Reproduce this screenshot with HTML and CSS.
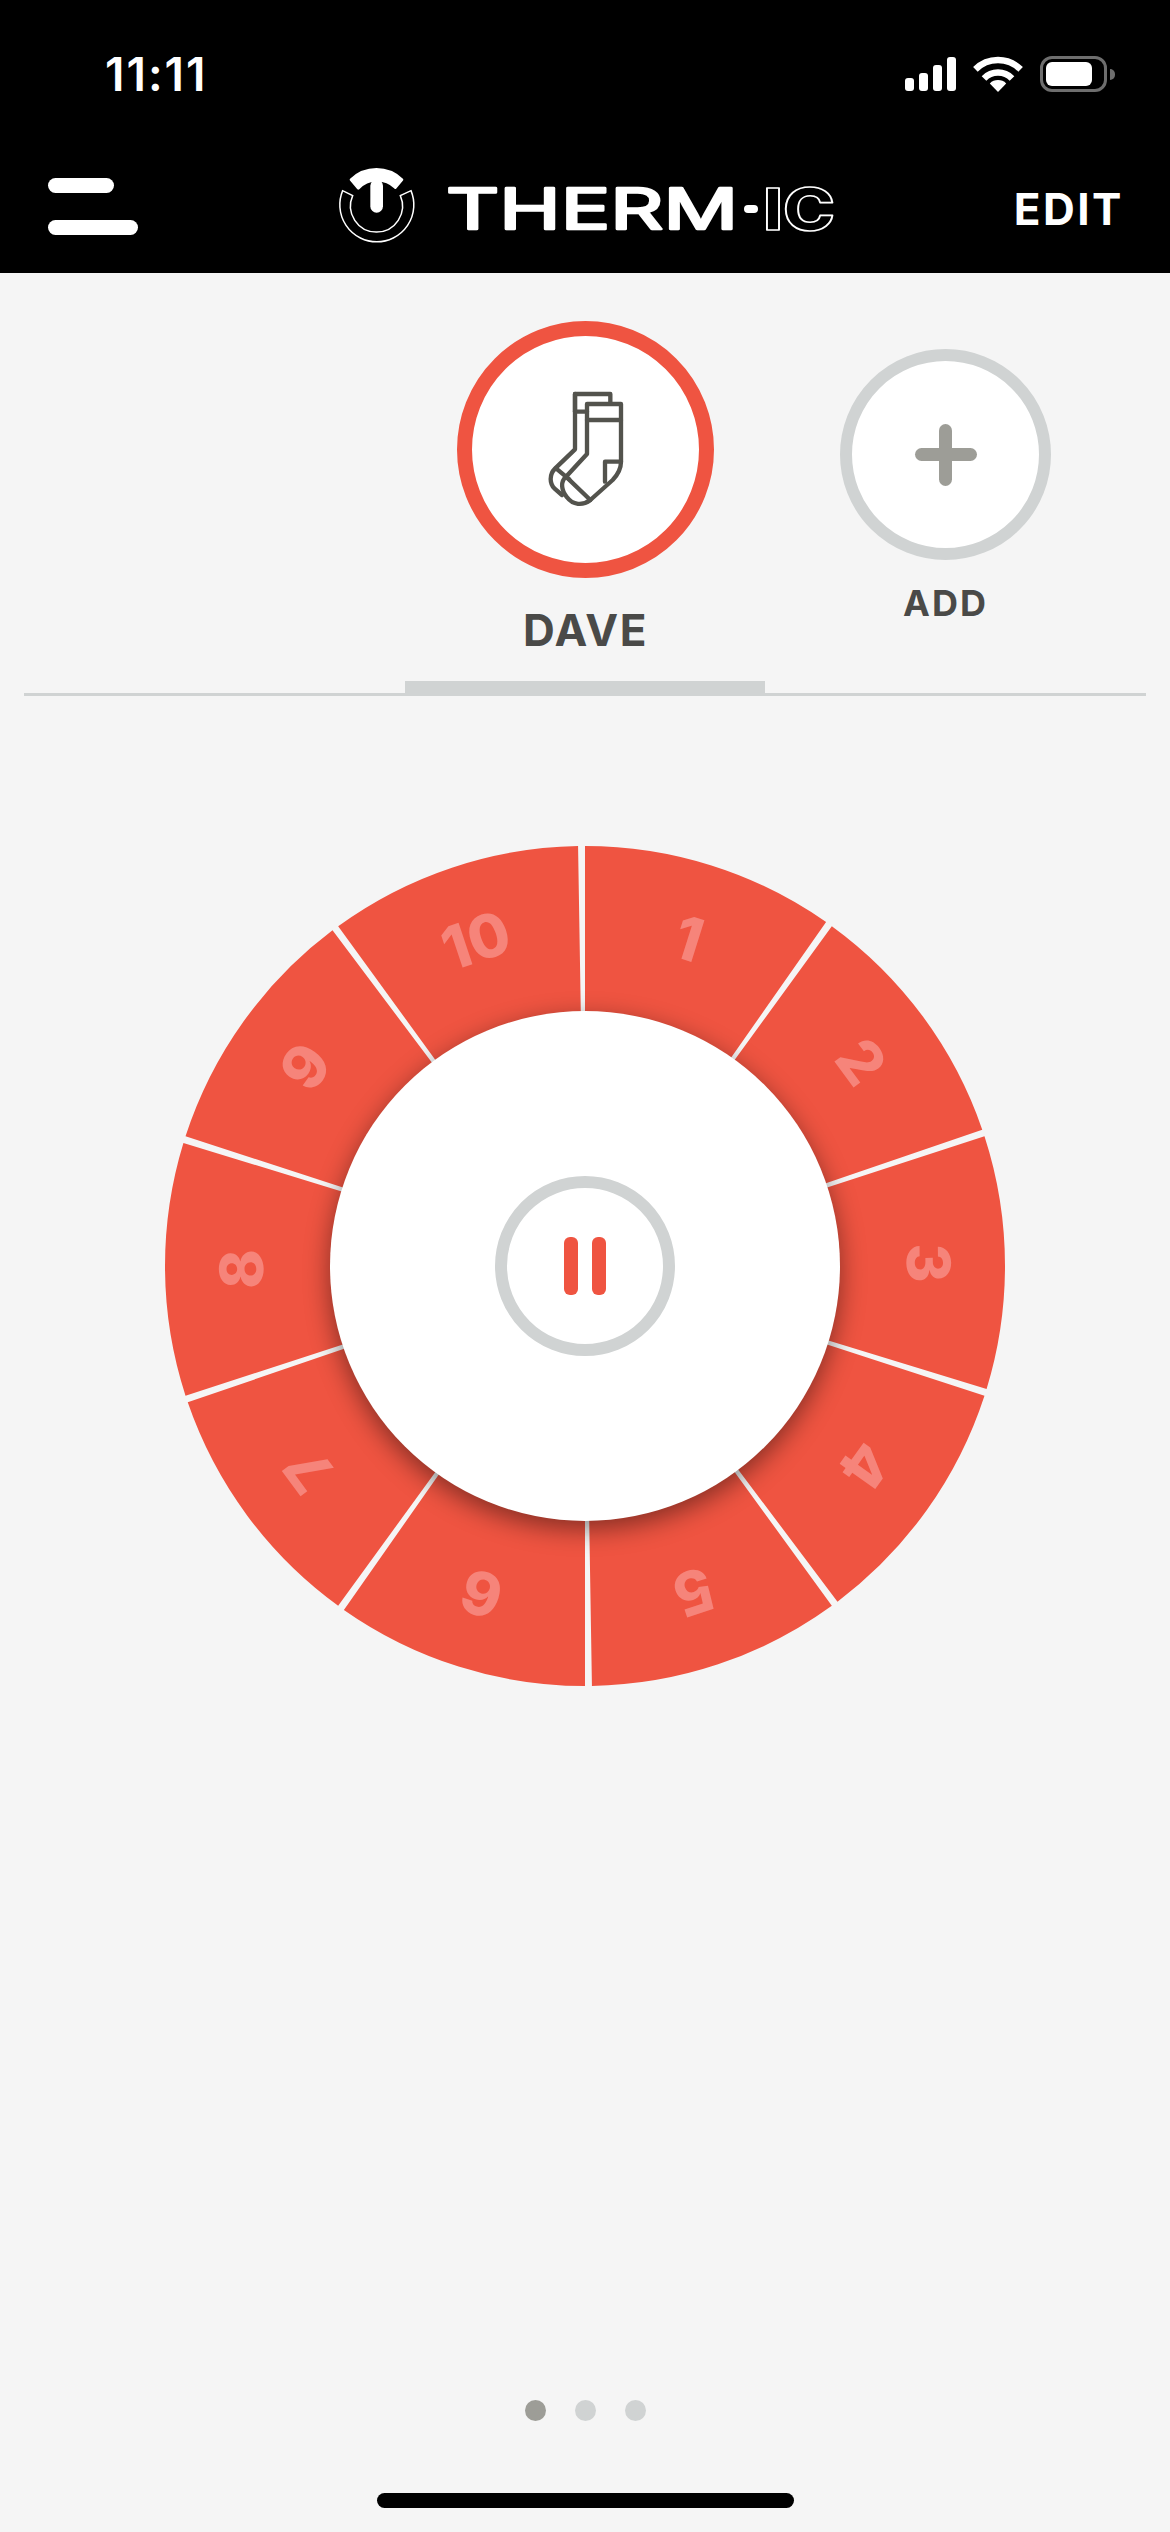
FILE: index.html
```html
<!DOCTYPE html>
<html lang="en">
<head>
  <meta charset="UTF-8" />
  <title>Therm-ic</title>
  <link rel="stylesheet" href="styles.css">
</head>
<body>
  <header class="topbar">
    <div class="status">
      <span class="time">11:11</span>
      <div class="status-icons">
        <div class="signal">
          <span class="bar bar1"></span>
          <span class="bar bar2"></span>
          <span class="bar bar3"></span>
          <span class="bar bar4"></span>
        </div>
        <svg class="wifi" width="50" height="36" viewBox="0 0 50 36">
          <path class="wifi-arc" d="M2.4 13.4A32 32 0 0 1 47.6 13.4" />
          <path class="wifi-arc" d="M11 22.4A19.6 19.6 0 0 1 39 22.4" />
          <path class="wifi-dot" d="M25 36L16.8 27.4A11.8 11.8 0 0 1 33.2 27.4Z" />
        </svg>
        <div class="battery">
          <div class="battery-body"><span class="battery-fill"></span></div>
          <span class="battery-nub"></span>
        </div>
      </div>
    </div>

    <nav class="nav">
      <div class="menu">
        <span class="menu-line short"></span>
        <span class="menu-line"></span>
      </div>
      <svg class="logo" width="505" height="85" viewBox="333 165 505 85">
        <g transform="translate(300 150) scale(0.3333)">
          <path class="logo-ring" d="M125 125A111 111 0 1 0 330 125L298 140A78 78 0 1 1 155 140Z" />
          <path class="logo-cap" d="M150 92A110 110 0 0 1 303 92L283 116A78 78 0 0 0 172 118Z" />
          <path class="logo-stem" d="M227 110V172" />
        </g>
        <text class="logo-word" x="445" y="230" textLength="292" lengthAdjust="spacingAndGlyphs">THERM</text>
        <rect class="logo-dot" x="743" y="206" width="14" height="8" rx="4" />
        <text class="logo-word-thin" x="762" y="230.5" textLength="72" lengthAdjust="spacingAndGlyphs">IC</text>
      </svg>
      <span class="edit">EDIT</span>
    </nav>
  </header>

  <section class="profiles">
    <div class="profile active">
      <div class="avatar">
        <svg class="sock" width="170" height="140" viewBox="0 0 510 420">
          <path d="M222 95V42H328V70" />
          <path d="M222 95H258" />
          <path d="M222 42V208L162 266C144 284 146 310 160 325L183 345" />
          <path d="M165 265L205 298" />
          <path d="M258 72H360V245C360 268 350 284 335 300L268 360C245 378 215 375 198 352C180 330 178 305 195 290L258 222Z" />
          <path d="M258 120H360" />
          <path d="M195 290L268 360" />
          <path d="M360 245H312V305" />
        </svg>
      </div>
      <span class="profile-name">DAVE</span>
    </div>
    <div class="profile add">
      <div class="avatar">
        <span class="plus"></span>
      </div>
      <span class="profile-name">ADD</span>
    </div>
  </section>

  <div class="tab-rule">
    <span class="rule-seg"></span>
    <span class="tab-indicator"></span>
    <span class="rule-seg"></span>
  </div>

  <main class="wheel">
    <svg class="wheel-ring" width="840" height="840" viewBox="0 0 840 840">
      <circle cx="420" cy="420" r="330" pathLength="360" transform="rotate(-90 420 420)" />
    </svg>

    <span class="wheel-num" style="--a:17.5deg">1</span>
    <span class="wheel-num" style="--a:53.5deg">2</span>
    <span class="wheel-num" style="--a:89.5deg">3</span>
    <span class="wheel-num" style="--a:125.5deg">4</span>
    <span class="wheel-num" style="--a:161.5deg">5</span>
    <span class="wheel-num" style="--a:197.5deg">6</span>
    <span class="wheel-num" style="--a:233.5deg">7</span>
    <span class="wheel-num" style="--a:269.5deg">8</span>
    <span class="wheel-num" style="--a:305.5deg">9</span>
    <span class="wheel-num" style="--a:341.5deg">10</span>

    <div class="hub">
      <div class="pause">
        <span class="pause-bar"></span>
        <span class="pause-bar"></span>
      </div>
    </div>
  </main>

  <div class="pager">
    <span class="dot current"></span>
    <span class="dot"></span>
    <span class="dot"></span>
  </div>
  <div class="home-bar"></div>
</body>
</html>
```

FILE: styles.css
```css
* {
  margin: 0;
  padding: 0;
  box-sizing: border-box;
}

body {
  width: 1170px;
  height: 2532px;
  background: #f5f5f5;
  font-family: 'Inter', 'Liberation Sans', sans-serif;
  display: flex;
  flex-direction: column;
  overflow: hidden;
}

/* top black area */
.topbar {
  height: 273px;
  background: #000;
  color: #fff;
}

.status {
  height: 148px;
  padding: 0 55px 0 105px;
  display: flex;
  align-items: center;
  justify-content: space-between;
}

.time {
  font-size: 46px;
  font-weight: 600;
  letter-spacing: 2px;
  line-height: 1;
}

.status-icons {
  display: flex;
  align-items: center;
}

.signal {
  display: flex;
  align-items: flex-end;
  gap: 5px;
  height: 34px;
  margin-right: 17px;
}

.bar {
  width: 9px;
  background: #fff;
  border-radius: 3px;
}

.bar1 { height: 13px; }
.bar2 { height: 18px; }
.bar3 { height: 26px; }
.bar4 { height: 34px; }

.wifi {
  margin-right: 17px;
}

.wifi-arc {
  fill: none;
  stroke: #fff;
  stroke-width: 6.5;
}

.wifi-dot {
  fill: #fff;
}

.battery {
  display: flex;
  align-items: center;
  gap: 3px;
}

.battery-body {
  width: 67px;
  height: 36px;
  padding: 3px 3px;
  border: 3px solid #6e6e6e;
  border-radius: 12px;
}

.battery-fill {
  display: block;
  width: 46px;
  height: 24px;
  background: #fff;
  border-radius: 6px;
}

.battery-nub {
  width: 5px;
  height: 11px;
  background: #6e6e6e;
  border-radius: 0 5px 5px 0;
}

.nav {
  height: 125px;
  padding: 0 46px 8px 48px;
  display: grid;
  grid-template-columns: 1fr auto 1fr;
  align-items: center;
}

.menu {
  display: flex;
  flex-direction: column;
  gap: 27px;
}

.menu-line {
  display: block;
  width: 90px;
  height: 15px;
  background: #fff;
  border-radius: 8px;
}

.menu-line.short {
  width: 66px;
}

.logo-ring {
  fill: none;
  stroke: #fff;
  stroke-width: 4.5;
}

.logo-cap {
  fill: #fff;
  stroke: #fff;
  stroke-width: 8;
  stroke-linejoin: round;
}

.logo-stem {
  fill: none;
  stroke: #fff;
  stroke-width: 38;
  stroke-linecap: round;
}

.logo-word {
  font-size: 56px;
  font-weight: 400;
  fill: #fff;
  stroke: #fff;
  stroke-width: 2.5;
  stroke-linejoin: round;
}

.logo-dot {
  fill: #fff;
}

.logo-word-thin {
  font-size: 58px;
  font-weight: 800;
  fill: none;
  stroke: #fff;
  stroke-width: 1.6;
  stroke-linejoin: round;
}

.edit {
  justify-self: end;
  font-size: 44px;
  font-weight: 700;
  letter-spacing: 2.5px;
  line-height: 1;
  margin-top: 4px;
}

/* profile tabs */
.profiles {
  display: flex;
  align-items: flex-start;
  gap: 126px;
  height: 408px;
  padding-left: 457px;
}

.profile {
  display: flex;
  flex-direction: column;
  align-items: center;
  color: #4a4a48;
  font-weight: 700;
}

.avatar {
  display: flex;
  align-items: center;
  justify-content: center;
  background: #fff;
  border-radius: 50%;
}

.profile.active {
  margin-top: 48px;
}

.profile.active .avatar {
  width: 257px;
  height: 257px;
  border: 15px solid #ef5441;
}

.profile.active .profile-name {
  margin-top: 30px;
  font-size: 44px;
  line-height: 44px;
  letter-spacing: 1.5px;
}

.profile.add {
  margin-top: 76px;
}

.profile.add .avatar {
  width: 211px;
  height: 211px;
  border: 12px solid #d0d3d3;
}

.profile.add .profile-name {
  margin-top: 25px;
  font-size: 36px;
  line-height: 36px;
  letter-spacing: 2px;
}

.sock path {
  fill: none;
  stroke: #53534d;
  stroke-width: 13;
  stroke-linejoin: round;
  stroke-linecap: round;
}

.plus {
  position: relative;
  width: 62px;
  height: 13px;
  background: #9d9d97;
  border-radius: 7px;
}

.plus::after {
  content: "";
  position: absolute;
  left: 24.5px;
  top: -24.5px;
  width: 13px;
  height: 62px;
  background: #9d9d97;
  border-radius: 7px;
}

.tab-rule {
  display: flex;
  align-items: flex-end;
  margin: 0 24px;
}

.rule-seg {
  flex: 1;
  height: 3px;
  background: #d0d3d3;
}

.tab-indicator {
  width: 360px;
  height: 15px;
  background: #d0d3d3;
}

/* wheel */
.wheel {
  position: relative;
  width: 840px;
  height: 840px;
  margin: 150px auto 0;
}

.wheel-ring {
  display: block;
}

.wheel-ring circle {
  fill: none;
  stroke: #ef5441;
  stroke-width: 180;
  stroke-dasharray: 35.04 0.96;
}

.wheel-num {
  position: absolute;
  left: 50%;
  top: 50%;
  width: 120px;
  height: 60px;
  margin: -30px 0 0 -60px;
  text-align: center;
  font-size: 60px;
  font-weight: 800;
  line-height: 60px;
  color: #f6847a;
  transform: rotate(var(--a)) translateY(-344px);
}

.hub {
  position: absolute;
  left: 165px;
  top: 165px;
  width: 510px;
  height: 510px;
  display: flex;
  align-items: center;
  justify-content: center;
  background: #fff;
  border-radius: 50%;
  box-shadow: 0 8px 26px rgba(0, 0, 0, 0.45);
}

.pause {
  width: 180px;
  height: 180px;
  display: flex;
  align-items: center;
  justify-content: center;
  gap: 14px;
  border: 12px solid #d0d3d3;
  border-radius: 50%;
}

.pause-bar {
  width: 14px;
  height: 58px;
  background: #ef5441;
  border-radius: 6px;
}

/* bottom */
.pager {
  display: flex;
  justify-content: center;
  gap: 29px;
  margin-top: auto;
  margin-bottom: 72px;
}

.dot {
  width: 21px;
  height: 21px;
  background: #d0d3d3;
  border-radius: 50%;
}

.dot.current {
  background: #9d9d97;
}

.home-bar {
  align-self: center;
  width: 417px;
  height: 15px;
  margin-bottom: 24px;
  background: #000;
  border-radius: 8px;
}
```
